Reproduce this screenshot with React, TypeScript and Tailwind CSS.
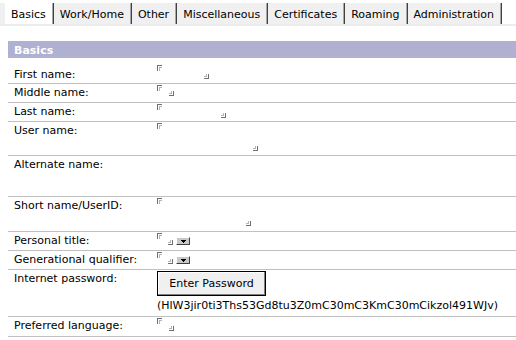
import React from "react";

const Open = () => (
  <svg width="5" height="6" className="block" shapeRendering="crispEdges">
    <rect x="0" y="0" width="5" height="1" fill="#707070" />
    <rect x="0" y="0" width="1" height="6" fill="#707070" />
    <rect x="2" y="2" width="3" height="1" fill="#b4b4b4" />
    <rect x="2" y="2" width="1" height="4" fill="#b4b4b4" />
  </svg>
);

const Close = () => (
  <svg width="5" height="5" className="block" shapeRendering="crispEdges">
    <rect x="4" y="0" width="1" height="5" fill="#707070" />
    <rect x="0" y="4" width="5" height="1" fill="#707070" />
    <rect x="2" y="0" width="1" height="3" fill="#b4b4b4" />
    <rect x="0" y="2" width="3" height="1" fill="#b4b4b4" />
  </svg>
);

const Drop = () => (
  <div className="w-[14px] h-[8px] bg-[#c8c8c8] border-t border-l border-t-white border-l-white border-r border-b border-r-[#404040] border-b-[#404040] flex items-center justify-center">
    <svg width="5" height="3" className="block" shapeRendering="crispEdges">
      <polygon points="0,0 5,0 2.5,3" fill="#000" />
    </svg>
  </div>
);

function Row({
  label,
  cls,
  labelCls,
  children,
}: {
  label: string;
  cls: string;
  labelCls?: string;
  children?: React.ReactNode;
}) {
  return (
    <div className={"flex border-b border-[#c0c0c0] " + cls}>
      <div className={"w-[149px] shrink-0 pl-[6px] " + (labelCls ?? "pt-[2px]")}>{label}</div>
      <div className="flex-1">{children}</div>
    </div>
  );
}

function Field({ closeCls, extra }: { closeCls: string; extra?: boolean }) {
  return (
    <div className="pt-[1px]">
      <Open />
      {extra ? (
        <div className={"flex items-end gap-[3px] " + closeCls}>
          <Close />
          <Drop />
        </div>
      ) : (
        <div className={closeCls}>
          <Close />
        </div>
      )}
    </div>
  );
}

const tabs = ["Basics", "Work/Home", "Other", "Miscellaneous", "Certificates", "Roaming", "Administration"];

export default function App() {
  return (
    <div className="w-[516px] h-[340px] overflow-hidden bg-white text-black font-['DejaVu_Sans',sans-serif] text-[11px] leading-[13px]">
      <div className="flex pt-[3px]">
        <div className="w-[5px] h-[21px] bg-[#f0f0f0]" />
        {tabs.map((t, i) => (
          <div
            key={t}
            className={
              "h-[21px] pl-[6px] pr-[7px] pt-[5px] border-r border-[#404040] shadow-[inset_-1px_0_0_#a8a8a8] whitespace-nowrap " +
              (i === 0 ? "bg-white" : "bg-[#f0f0f0]")
            }
          >
            {t}
          </div>
        ))}
      </div>
      <div className="h-[2px] bg-[#ececec]" />
      <div className="mt-[15px] ml-[8px] h-[17px] bg-[#b0b0d0] pl-[6px] pt-[2px] leading-[15px] font-bold text-white">
        Basics
      </div>
      <div className="ml-[8px] mt-[6px]">
        <Row label="First name:" cls="h-[20px]" labelCls="pt-[4px]">
          <Field closeCls="mt-[3px] ml-[47px]" />
        </Row>
        <Row label="Middle name:" cls="h-[19px]">
          <Field closeCls="mt-[0px] ml-[12px]" />
        </Row>
        <Row label="Last name:" cls="h-[19px]">
          <Field closeCls="mt-[3px] ml-[64px]" />
        </Row>
        <Row label="User name:" cls="h-[34px]">
          <Field closeCls="mt-[17px] ml-[96px]" />
        </Row>
        <Row label="Alternate name:" cls="h-[41px]" />
        <Row label="Short name/UserID:" cls="h-[35px]">
          <div className="pt-[1px]">
            <Open />
            <div className="mt-[17px] ml-[89px]">
              <Close />
            </div>
          </div>
        </Row>
        <Row label="Personal title:" cls="h-[19px]">
          <Field closeCls="mt-[-2px] ml-[11px]" extra />
        </Row>
        <Row label="Generational qualifier:" cls="h-[19px]">
          <Field closeCls="mt-[-2px] ml-[11px]" extra />
        </Row>
        <Row label="Internet password:" cls="h-[47px]">
          <div className="pt-[1px]">
            <button className="w-[109px] h-[25px] bg-[#f0f0f0] border border-black shadow-[inset_-1px_-1px_0_#808080,inset_1px_1px_0_#ffffff] flex items-center justify-center">
              Enter Password
            </button>
            <div className="mt-[3px] whitespace-nowrap">(HlW3jir0ti3Ths53Gd8tu3Z0mC30mC3KmC30mCikzol491WJv)</div>
          </div>
        </Row>
        <Row label="Preferred language:" cls="h-[20px]">
          <Field closeCls="mt-[2px] ml-[12px]" />
        </Row>
      </div>
    </div>
  );
}
